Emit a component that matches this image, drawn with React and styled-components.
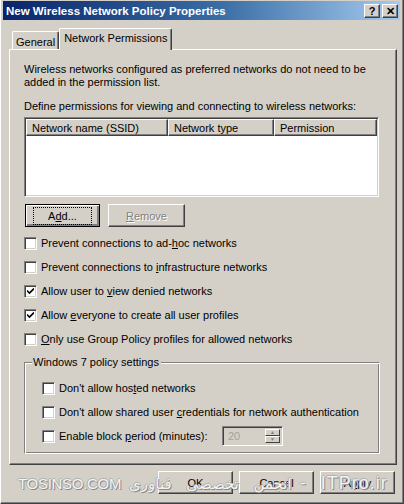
import React from "react";
import styled, { createGlobalStyle } from "styled-components";

const GlobalStyle = createGlobalStyle`
  body {
    margin: 0;
    background: #d4d0c8;
    font-family: "Liberation Sans", Tahoma, sans-serif;
    font-size: 11px;
    color: #000;
  }
`;

const Window = styled.div`
  position: relative;
  width: 404px;
  height: 504px;
  box-sizing: border-box;
  background: #d4d0c8;
  border-left: 1px solid #ffffff;
  border-bottom: 1px solid #404040;
  border-right: 1px solid #404040;
  box-shadow: inset -1px -1px 0 #808080;
  overflow: hidden;
`;

const TitleBar = styled.div`
  display: flex;
  align-items: center;
  justify-content: space-between;
  height: 19px;
  margin: 1px 3px 0 2px;
  padding: 0 2px 0 3px;
  background: linear-gradient(to right, #0a246a, #3a6ea5 55%, #a6caf0);
  color: #fff;
  font-weight: bold;
  font-size: 11.5px;
`;

const TitleButtons = styled.div`
  display: flex;
  gap: 2px;
`;

const TitleButton = styled.div`
  width: 16px;
  height: 14px;
  box-sizing: border-box;
  background: #d4d0c8;
  border: 1px solid;
  border-color: #ffffff #404040 #404040 #ffffff;
  box-shadow: inset -1px -1px 0 #808080;
  color: #000;
  font-size: 11px;
  font-weight: bold;
  line-height: 12px;
  text-align: center;
`;

const Body = styled.div`
  padding: 8px 6px 0 8px;
`;

const TabRow = styled.div`
  display: flex;
  align-items: flex-end;
  height: 21px;
  padding-left: 3px;
  position: relative;
  z-index: 1;
`;

const Tab = styled.div`
  box-sizing: border-box;
  height: ${(p) => (p.$active ? "22px" : "18px")};
  padding: ${(p) => (p.$active ? "3px 4px 0 4px" : "4px 3px 0 3px")};
  margin-bottom: ${(p) => (p.$active ? "-1px" : "0")};
  background: #d4d0c8;
  border-top: 1px solid #ffffff;
  border-left: 1px solid #ffffff;
  border-right: 1px solid #404040;
  box-shadow: inset -1px 0 0 #808080;
  border-radius: 2px 2px 0 0;
`;

const Panel = styled.div`
  box-sizing: border-box;
  width: 388px;
  height: 416px;
  border: 1px solid;
  border-color: #ffffff #404040 #404040 #ffffff;
  box-shadow: inset -1px -1px 0 #808080;
  padding: 13px 0 0 14px;
`;

const Paragraph = styled.div`
  line-height: 13px;
  width: 345px;
  margin-bottom: ${(p) => p.$gap || 0}px;
`;

const ListView = styled.div`
  box-sizing: border-box;
  width: 355px;
  height: 80px;
  background: #fff;
  border: 1px solid;
  border-color: #808080 #ffffff #ffffff #808080;
  box-shadow: inset 1px 1px 0 #404040, inset -1px -1px 0 #d4d0c8;
  padding: 1px;
`;

const HeaderRow = styled.div`
  display: flex;
  height: 17px;
`;

const HeaderCell = styled.div`
  box-sizing: border-box;
  width: ${(p) => p.$w};
  flex: ${(p) => (p.$w ? "none" : "1")};
  height: 17px;
  padding: 2px 0 0 5px;
  background: #d4d0c8;
  border: 1px solid;
  border-color: #ffffff #404040 #404040 #ffffff;
  box-shadow: inset -1px -1px 0 #808080;
`;

const ButtonRow = styled.div`
  display: flex;
  gap: ${(p) => p.$gap}px;
  justify-content: ${(p) => (p.$end ? "flex-end" : "flex-start")};
  margin: ${(p) => p.$margin};
`;

const Button = styled.div`
  box-sizing: border-box;
  width: ${(p) => p.$w || 75}px;
  height: 23px;
  display: flex;
  align-items: center;
  justify-content: center;
  background: #d4d0c8;
  border: 1px solid;
  border-color: ${(p) =>
    p.$default ? "#000" : "#ffffff #404040 #404040 #ffffff"};
  box-shadow: ${(p) =>
    p.$default
      ? "inset 1px 1px 0 #fff, inset -2px -2px 0 #808080"
      : "inset -1px -1px 0 #808080"};
  color: ${(p) => (p.$disabled ? "#808080" : "#000")};
  text-shadow: ${(p) => (p.$disabled ? "1px 1px 0 #fff" : "none")};
`;

const Focus = styled.span`
  padding: 2px 14px;
  outline: 1px dotted #000;
`;

const U = styled.span`
  text-decoration: underline;
`;

const CheckList = styled.div`
  margin-top: 4px;
`;

const CheckRow = styled.div`
  display: flex;
  align-items: center;
  height: 24px;
  gap: 4px;
`;

const Box = styled.div`
  box-sizing: border-box;
  width: 13px;
  height: 13px;
  flex: none;
  background: #fff;
  border: 1px solid;
  border-color: #808080 #ffffff #ffffff #808080;
  box-shadow: inset 1px 1px 0 #404040, inset -1px -1px 0 #d4d0c8;
  display: flex;
  align-items: center;
  justify-content: center;
`;

const Label = styled.span`
  width: ${(p) => (p.$w ? `${p.$w}px` : "auto")};
`;

const Group = styled.div`
  position: relative;
  box-sizing: border-box;
  width: 356px;
  margin-top: 11px;
  border: 1px solid;
  border-color: #808080 #ffffff #ffffff #808080;
  box-shadow: inset 1px 1px 0 #ffffff, inset -1px -1px 0 #808080;
  padding: 13px 0 5px 17px;
`;

const Legend = styled.span`
  position: absolute;
  top: -7px;
  left: 7px;
  padding: 0 2px 0 1px;
  background: #d4d0c8;
`;

const Spin = styled.div`
  display: flex;
  box-sizing: border-box;
  width: 61px;
  height: 20px;
  border: 1px solid;
  border-color: #808080 #ffffff #ffffff #808080;
  box-shadow: inset 1px 1px 0 #404040;
  background: #d4d0c8;
  padding: 2px;
`;

const SpinValue = styled.div`
  flex: 1;
  color: #a0a0a0;
  padding: 1px 0 0 3px;
`;

const SpinButtons = styled.div`
  display: flex;
  flex-direction: column;
  width: 15px;
`;

const SpinButton = styled.div`
  flex: 1;
  box-sizing: border-box;
  border: 1px solid;
  border-color: #ffffff #404040 #404040 #ffffff;
  display: flex;
  align-items: center;
  justify-content: center;
  color: #808080;
  font-size: 5px;
  line-height: 1;
`;

const Watermark = styled.div`
  position: absolute;
  left: 17px;
  top: 473px;
  display: flex;
  align-items: baseline;
  font-family: "Liberation Sans", "DejaVu Sans", sans-serif;
  font-size: 15px;
  letter-spacing: -0.3px;
  color: #f4f4f2;
  text-shadow: 1px 1px 0 #8a8a8a, -1px 0 0 #a8a8a8, 0 -1px 0 #b0b0b0;
  white-space: nowrap;
  pointer-events: none;
`;

const Persian = styled.span`
  font-family: "DejaVu Sans", "Noto Sans", sans-serif;
  font-size: 15px;
  margin: 0 8px 0 8px;
  letter-spacing: 1px;
  word-spacing: 10px;
`;

const Site = styled.span`
  font-size: 18px;
  letter-spacing: 1px;
  word-spacing: 8px;
`;

const Check = () => (
  <svg width="7" height="7" viewBox="0 0 7 7">
    <path d="M0 2.5 L2.5 5 L7 0.5" stroke="#000" strokeWidth="1.6" fill="none" />
  </svg>
);

const CheckItem = ({ checked, children, w }) => (
  <CheckRow>
    <Box>{checked && <Check />}</Box>
    <Label $w={w}>{children}</Label>
  </CheckRow>
);

export default function App() {
  return (
    <Window>
      <GlobalStyle />
      <TitleBar>
        <span>New Wireless Network Policy Properties</span>
        <TitleButtons>
          <TitleButton>?</TitleButton>
          <TitleButton>✕</TitleButton>
        </TitleButtons>
      </TitleBar>
      <Body>
        <TabRow>
          <Tab>General</Tab>
          <Tab $active>Network Permissions</Tab>
        </TabRow>
        <Panel>
          <Paragraph $gap={11}>
            Wireless networks configured as preferred networks do not need to be
            added in the permission list.
          </Paragraph>
          <Paragraph $gap={4}>
            Define permissions for viewing and connecting to wireless networks:
          </Paragraph>
          <ListView>
            <HeaderRow>
              <HeaderCell $w="142px">Network name (SSID)</HeaderCell>
              <HeaderCell $w="106px">Network type</HeaderCell>
              <HeaderCell>Permission</HeaderCell>
            </HeaderRow>
          </ListView>
          <ButtonRow $gap={8} $margin="7px 0 0 1px">
            <Button $default $w={75}>
              <Focus>
                A<U>d</U>d...
              </Focus>
            </Button>
            <Button $disabled $w={77}>
              <U>R</U>emove
            </Button>
          </ButtonRow>
          <CheckList>
            <CheckItem>
              Prevent connections to ad-<U>h</U>oc networks
            </CheckItem>
            <CheckItem>
              Prevent connections to <U>i</U>nfrastructure networks
            </CheckItem>
            <CheckItem checked>
              Allow user to <U>v</U>iew denied networks
            </CheckItem>
            <CheckItem checked>
              Allow <U>e</U>veryone to create all user profiles
            </CheckItem>
            <CheckItem>
              <U>O</U>nly use Group Policy profiles for allowed networks
            </CheckItem>
          </CheckList>
          <Group>
            <Legend>Windows 7 policy settings</Legend>
            <CheckItem>
              Don't allow hos<U>t</U>ed networks
            </CheckItem>
            <CheckItem>
              Don't allow shared user <U>c</U>redentials for network authentication
            </CheckItem>
            <CheckRow>
              <Box />
              <Label $w={159}>
                Enable block <U>p</U>eriod (minutes):
              </Label>
              <Spin>
                <SpinValue>20</SpinValue>
                <SpinButtons>
                  <SpinButton>▲</SpinButton>
                  <SpinButton>▼</SpinButton>
                </SpinButtons>
              </Spin>
            </CheckRow>
          </Group>
        </Panel>
        <ButtonRow $end $gap={6} $margin="6px 2px 0 0">
          <Button>OK</Button>
          <Button>Cancel</Button>
          <Button>
            A<U>p</U>ply
          </Button>
        </ButtonRow>
      </Body>
      <Watermark>
        TOSINSO.COM<Persian>انجمن تخصصی فناوری</Persian>
        <Site>- ITPro.ir</Site>
      </Watermark>
    </Window>
  );
}
